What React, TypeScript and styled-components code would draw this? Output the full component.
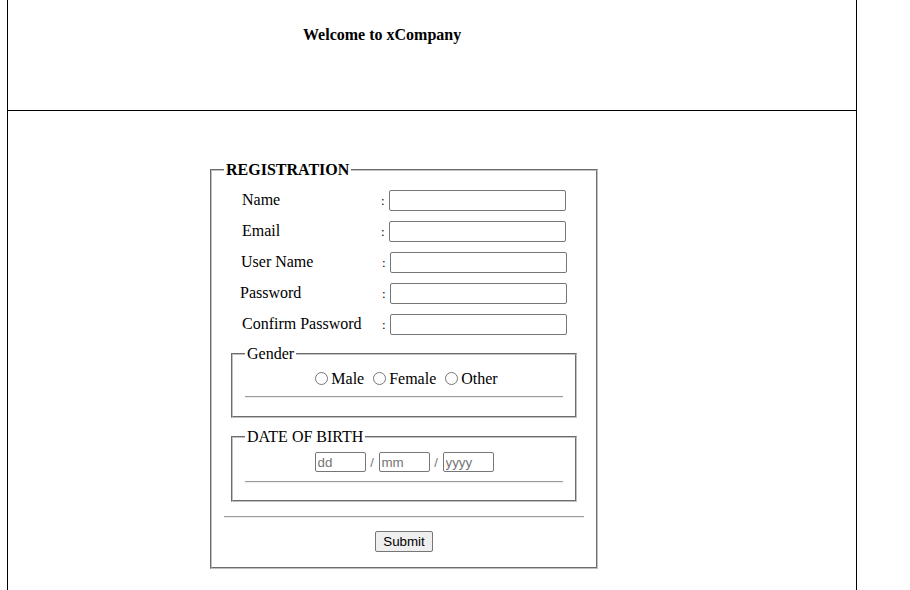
import React from "react";
import styled, { createGlobalStyle } from "styled-components";

const Global = createGlobalStyle`
  html, body { margin: 0; padding: 0; background: #fff; }
  body { font-family: "Liberation Serif", "Times New Roman", serif; font-size: 16px; color: #000; }
`;

const Page = styled.div`
  box-sizing: border-box;
  width: 850px;
  min-height: 590px;
  margin-left: 7px;
  border-left: 1px solid #000;
  border-right: 1px solid #000;
`;

const Header = styled.header`
  box-sizing: border-box;
  height: 111px;
  border-bottom: 1px solid #000;
  padding: 26px 0 0 295px;
`;

const Title = styled.h1`
  margin: 0;
  font-size: 16px;
  line-height: 18px;
  font-weight: bold;
`;

const Main = styled.main`
  padding: 50px 0 0 202px;
`;

const Fieldset = styled.fieldset<{ $inner?: boolean }>`
  box-sizing: border-box;
  width: ${(p) => (p.$inner ? "346px" : "388px")};
  margin: ${(p) => (p.$inner ? "0 7px" : "0")};
  padding: ${(p) => (p.$inner ? "0 12px 10px" : "0 12px 15px")};
  border: 2px groove #c0c0c0;
  min-inline-size: 0;
`;

const Legend = styled.legend<{ $bold?: boolean }>`
  padding: 0 2px;
  font-size: 16px;
  line-height: 18px;
  font-weight: ${(p) => (p.$bold ? "bold" : "normal")};
`;

const Rows = styled.div`
  display: flex;
  flex-direction: column;
  gap: 10px;
  padding-top: 11px;
`;

const Row = styled.div<{ $shift?: number }>`
  display: flex;
  align-items: center;
  height: 21px;
  padding-left: ${(p) => 18 + (p.$shift ?? 0)}px;
`;

const Label = styled.span<{ $w: number }>`
  width: ${(p) => p.$w}px;
  margin-top: -2px;
`;

const Colon = styled.span`
  width: 8px;
  font-size: 13px;
`;

const TextInput = styled.input`
  box-sizing: border-box;
  width: 177px;
  height: 21px;
  margin: 0;
  padding: 1px 2px;
  border: 1px solid #767676;
  border-radius: 2px;
  font-family: Arial, "Liberation Sans", sans-serif;
  font-size: 13.33px;
`;

const Group = styled.div<{ $top: number }>`
  margin-top: ${(p) => p.$top}px;
`;

const Centered = styled.div<{ $h: number; $pt: number }>`
  display: flex;
  justify-content: center;
  align-items: center;
  height: ${(p) => p.$h}px;
  padding-top: ${(p) => p.$pt}px;
`;

const RadioLabel = styled.label`
  display: inline-flex;
  align-items: center;
  & + & { margin-left: 4px; }
`;

const Radio = styled.input`
  width: 13px;
  height: 13px;
  margin: -1px 3px 0 5px;
`;

const DateInput = styled.input`
  box-sizing: border-box;
  width: 51px;
  height: 20px;
  margin: 0;
  padding: 1px 2px;
  border: 1px solid #767676;
  border-radius: 2px;
  font-family: Arial, "Liberation Sans", sans-serif;
  font-size: 13.33px;
  &::placeholder { color: #757575; }
`;

const Slash = styled.span`
  width: 13px;
  text-align: center;
  font-family: Arial, "Liberation Sans", sans-serif;
  font-size: 13px;
  color: #777;
`;

const Rule = styled.hr<{ $m: string }>`
  margin: ${(p) => p.$m};
  border: 0;
  border-top: 1px solid #9a9a9a;
  border-bottom: 1px solid #eee;
  height: 0;
`;

const ButtonRow = styled.div`
  display: flex;
  justify-content: center;
`;

const Button = styled.button`
  box-sizing: border-box;
  height: 21px;
  padding: 1px 7px;
  border: 1px solid #767676;
  border-radius: 2px;
  background: #efefef;
  font-family: Arial, "Liberation Sans", sans-serif;
  font-size: 13.33px;
  color: #000;
`;

const fields = [
  { label: "Name", shift: 0, w: 139 },
  { label: "Email", shift: 0, w: 139 },
  { label: "User Name", shift: -1, w: 141 },
  { label: "Password", shift: -2, w: 142 },
  { label: "Confirm Password", shift: 0, w: 140 },
];

export default function App() {
  return (
    <>
      <Global />
      <Page>
        <Header>
          <Title>Welcome to xCompany</Title>
        </Header>
        <Main>
          <Fieldset>
            <Legend $bold>REGISTRATION</Legend>
            <Rows>
              {fields.map((f) => (
                <Row key={f.label} $shift={f.shift}>
                  <Label $w={f.w}>{f.label}</Label>
                  <Colon>:</Colon>
                  <TextInput type="text" />
                </Row>
              ))}
            </Rows>
            <Group $top={10}>
              <Fieldset $inner>
                <Legend>Gender</Legend>
                <Centered $h={18} $pt={7}>
                  <RadioLabel><Radio type="radio" name="g" />Male</RadioLabel>
                  <RadioLabel><Radio type="radio" name="g" />Female</RadioLabel>
                  <RadioLabel><Radio type="radio" name="g" />Other</RadioLabel>
                </Centered>
                <Rule $m="8px 0" />
              </Fieldset>
            </Group>
            <Group $top={10}>
              <Fieldset $inner>
                <Legend>DATE OF BIRTH</Legend>
                <Centered $h={20} $pt={6}>
                  <DateInput placeholder="dd" />
                  <Slash>/</Slash>
                  <DateInput placeholder="mm" />
                  <Slash>/</Slash>
                  <DateInput placeholder="yyyy" />
                </Centered>
                <Rule $m="9px 0 7px" />
              </Fieldset>
            </Group>
            <Rule $m="14px 0 13px" />
            <ButtonRow>
              <Button type="button">Submit</Button>
            </ButtonRow>
          </Fieldset>
        </Main>
      </Page>
    </>
  );
}
